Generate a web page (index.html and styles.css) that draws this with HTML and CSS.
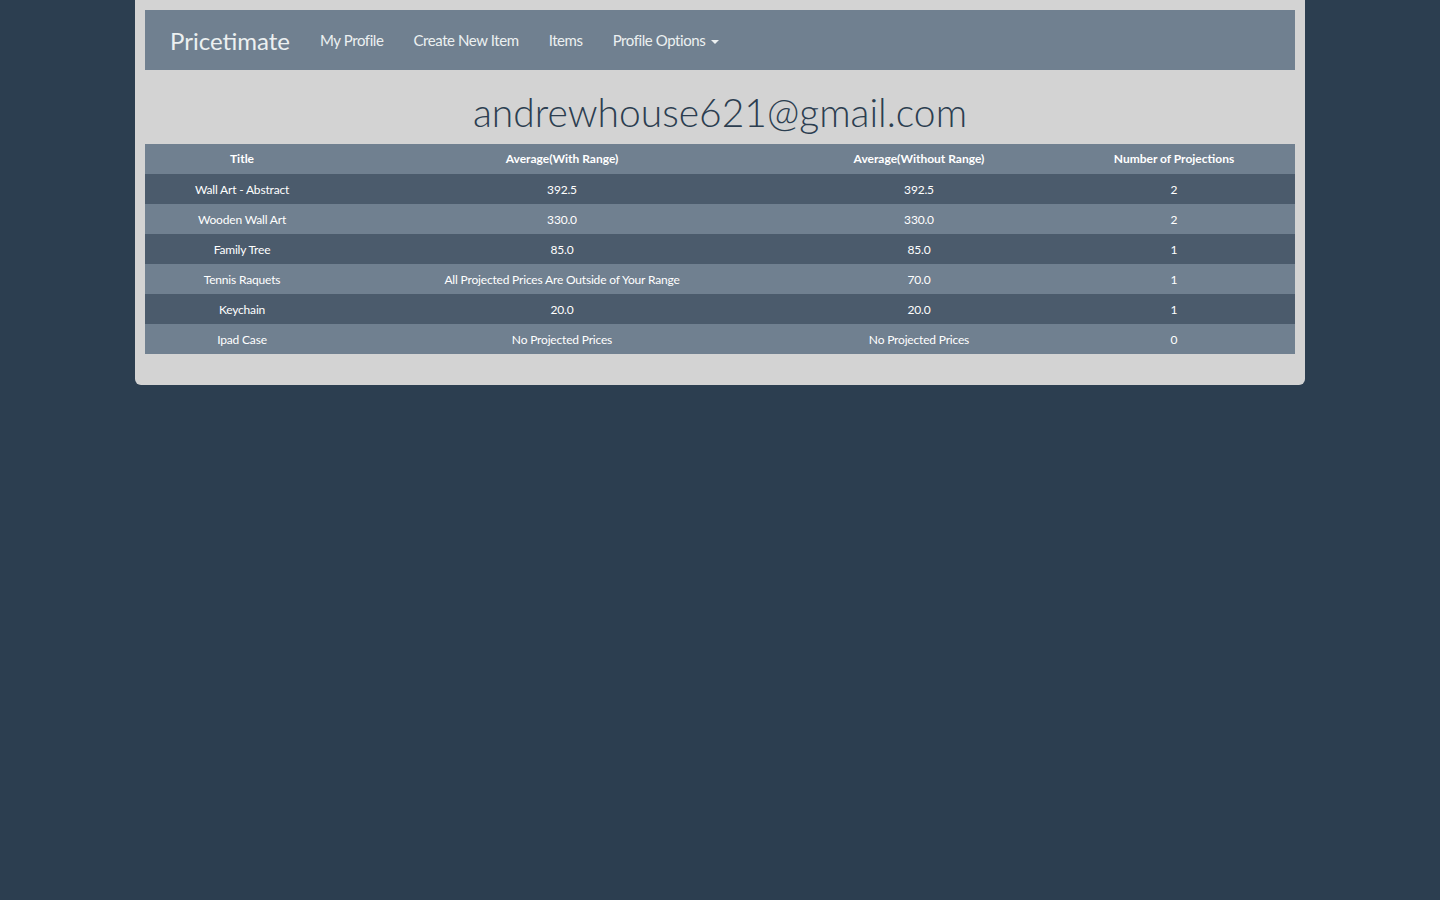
FILE: index.html
```html
<!DOCTYPE html>
<html>
<head>
<meta charset="utf-8">
<link rel="stylesheet" href="styles.css">
</head>
<body>
<div class="container">
  <nav class="navbar">
    <a class="brand">Pricetimate</a>
    <ul class="nav">
      <li><a>My Profile</a></li>
      <li><a>Create New Item</a></li>
      <li><a>Items</a></li>
      <li><a>Profile Options <span class="caret"></span></a></li>
    </ul>
  </nav>
  <h1 class="title">andrewhouse621@gmail.com</h1>
  <table class="items">
    <colgroup>
      <col class="c1"><col class="c2"><col class="c3"><col class="c4">
    </colgroup>
    <thead>
      <tr><th>Title</th><th>Average(With Range)</th><th>Average(Without Range)</th><th>Number of Projections</th></tr>
    </thead>
    <tbody>
      <tr class="dark"><td>Wall Art - Abstract</td><td>392.5</td><td>392.5</td><td>2</td></tr>
      <tr class="light"><td>Wooden Wall Art</td><td>330.0</td><td>330.0</td><td>2</td></tr>
      <tr class="dark"><td>Family Tree</td><td>85.0</td><td>85.0</td><td>1</td></tr>
      <tr class="light"><td>Tennis Raquets</td><td>All Projected Prices Are Outside of Your Range</td><td>70.0</td><td>1</td></tr>
      <tr class="dark"><td>Keychain</td><td>20.0</td><td>20.0</td><td>1</td></tr>
      <tr class="light"><td>Ipad Case</td><td>No Projected Prices</td><td>No Projected Prices</td><td>0</td></tr>
    </tbody>
  </table>
</div>
</body>
</html>
```

FILE: styles.css
```css
html, body {
  margin: 0;
  padding: 0;
  background: #2c3e50;
  font-family: Lato, "Open Sans", sans-serif;
}
.container {
  width: 1170px;
  box-sizing: border-box;
  margin: 0 auto;
  padding: 10px 10px 31px;
  background: #d3d3d3;
  border-radius: 0 0 6px 6px;
}
.navbar {
  height: 60px;
  background: #708090;
  display: flex;
  align-items: center;
  padding: 0 25px;
}
.brand {
  color: #ecf0f1;
  font-size: 24px;
  margin-right: 15px;
}
.nav {
  list-style: none;
  display: flex;
  margin: 0;
  padding: 0;
}
.nav a {
  display: block;
  color: #ecf0f1;
  font-size: 15px;
  padding: 0 15px;
  letter-spacing: -0.42px;
}
.caret {
  display: inline-block;
  width: 0;
  height: 0;
  border-top: 4px solid #ecf0f1;
  border-left: 4px solid transparent;
  border-right: 4px solid transparent;
  vertical-align: middle;
  margin-left: 2px;
}
.title {
  margin: 0;
  height: 74px;
  line-height: 84px;
  text-align: center;
  font-weight: 300;
  font-size: 39px;
  color: #2c3e50;
}
.items {
  width: 100%;
  border-collapse: collapse;
  color: #fff;
  font-size: 12px;
}
.c1 { width: 194px; }
.c2 { width: 446px; }
.c3 { width: 268px; }
.c4 { width: 242px; }
.items th, .items td {
  height: 30px;
  padding: 0;
  text-align: center;
}
.items td {
  letter-spacing: -0.18px;
}
.items th {
  background: #708090;
  font-weight: 700;
  line-height: 28px;
}
.dark td { background: #4b5b6c; }
.light td { background: #708090; }
```
